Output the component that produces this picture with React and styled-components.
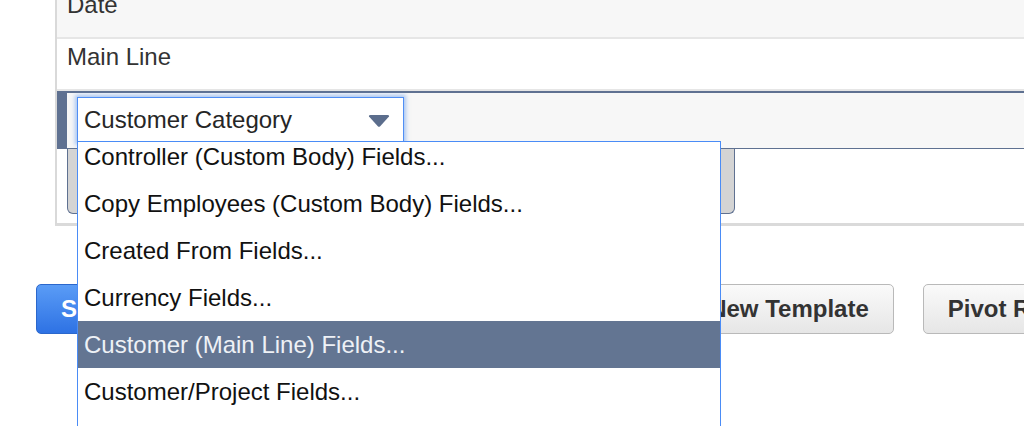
import React from 'react';
import styled, { createGlobalStyle } from 'styled-components';

const GlobalStyle = createGlobalStyle`
    html, body {
        margin: 0;
        height: 426px;
        overflow: hidden;
        background: #ffffff;
    }
    body {
        font-family: "Liberation Sans", Arial, Helvetica, sans-serif;
        color: #333333;
    }
`;

const fieldGroups = [
    'Controller (Custom Body) Fields...',
    'Copy Employees (Custom Body) Fields...',
    'Created From Fields...',
    'Currency Fields...',
    'Customer (Main Line) Fields...',
    'Customer/Project Fields...',
    'Department Fields...',
    'Employee Fields...',
];

const buttons = [
    { label: 'Save', primary: true },
    { label: 'Print' },
    { label: 'Email' },
    { label: 'Export' },
    { label: 'Create New Template' },
    { label: 'Pivot Report' },
];

function App() {
    const active = 'Customer (Main Line) Fields...';

    return (
        <Page>
            <GlobalStyle />
            <Panel>
                <Row $shade>Date</Row>
                <Row>Main Line</Row>
                <SelectedRow>
                    <SelectWrap>
                        <Select>
                            <span>Customer Category</span>
                            <Arrow viewBox="0 0 22 12">
                                <path d="M1 1.5 Q0.5 0 2.5 0 H19.5 Q21.5 0 21 1.5 L12.2 11.2 Q11 12.4 9.8 11.2 Z" />
                            </Arrow>
                        </Select>
                        <DropList>
                            <Options>
                                {fieldGroups.map(group => (
                                    <Option key={group} $active={group === active}>{group}</Option>
                                ))}
                            </Options>
                        </DropList>
                    </SelectWrap>
                </SelectedRow>
                <DetailArea>
                    <DetailBox />
                </DetailArea>
            </Panel>
            <ButtonRow>
                {buttons.map(b => (
                    <Button key={b.label} $primary={b.primary}>{b.label}</Button>
                ))}
            </ButtonRow>
        </Page>
    );
}

const Page = styled.div`
    width: 1024px;
    height: 426px;
    overflow: hidden;
`;

const Panel = styled.div`
    margin: -13px 0 0 55px;
    border-left: 2px solid #d9d9d9;
    border-bottom: 3px solid #dadada;
`;

const Row = styled.div`
    height: 46px;
    padding: 4px 0 0 10px;
    font-size: 24px;
    line-height: 28px;
    color: #333333;
    background: ${props => props.$shade ? '#f7f7f7' : '#ffffff'};
    border-bottom: 2px solid #e6e6e6;
`;

const SelectedRow = styled.div`
    display: flex;
    align-items: flex-start;
    padding: 4px 0 5px 10px;
    background: #f7f7f7;
    border-top: 2px solid #5f7191;
    border-left: 10px solid #5f7191;
    border-bottom: 1px solid #5f7191;
`;

const SelectWrap = styled.div`
    position: relative;
    z-index: 5;
`;

const Select = styled.div`
    box-sizing: border-box;
    width: 327px;
    height: 46px;
    display: flex;
    align-items: center;
    justify-content: space-between;
    padding: 0 13px 0 6px;
    background: #ffffff;
    border: 1px solid #4f8ef5;
    box-shadow: 0 0 4px 2px rgba(90, 150, 240, 0.5);
    font-size: 24px;
    color: #262626;
`;

const Arrow = styled.svg`
    width: 22px;
    height: 12px;
    margin-top: 2px;
    fill: #5b6d8c;
`;

const DropList = styled.div`
    position: absolute;
    top: 44px;
    left: 0;
    box-sizing: border-box;
    width: 644px;
    height: 330px;
    overflow: hidden;
    background: #ffffff;
    border: 1px solid #4a8cf6;
`;

const Options = styled.ul`
    list-style: none;
    margin: -9px 0 0;
    padding: 0;
`;

const Option = styled.li`
    height: 47px;
    padding-left: 6px;
    font-size: 24px;
    line-height: 47px;
    white-space: nowrap;
    color: ${props => props.$active ? '#eef1f6' : '#111111'};
    background: ${props => props.$active ? '#637592' : 'transparent'};
`;

const DetailArea = styled.div`
    padding: 0 0 9px 10px;
    background: #ffffff;
`;

const DetailBox = styled.div`
    box-sizing: border-box;
    width: 668px;
    height: 65px;
    background: #d4d4d4;
    border: 1px solid #5f7191;
    border-top: none;
    border-radius: 0 0 6px 6px;
`;

const ButtonRow = styled.div`
    display: flex;
    gap: 29px;
    margin-top: 58px;
    padding-left: 36px;
`;

const Button = styled.button`
    flex: none;
    height: 50px;
    padding: 0 24px;
    font-family: "Liberation Sans", Arial, Helvetica, sans-serif;
    font-size: 24px;
    font-weight: 700;
    white-space: nowrap;
    border-radius: 5px;
    color: ${props => props.$primary ? '#ffffff' : '#333333'};
    background: ${props => props.$primary
        ? 'linear-gradient(#5a9cf6, #2e72e4)'
        : 'linear-gradient(#fafafa, #e6e6e6)'};
    border: 1px solid ${props => props.$primary ? '#2b67cc' : '#b9b9b9'};
`;

export default App;
